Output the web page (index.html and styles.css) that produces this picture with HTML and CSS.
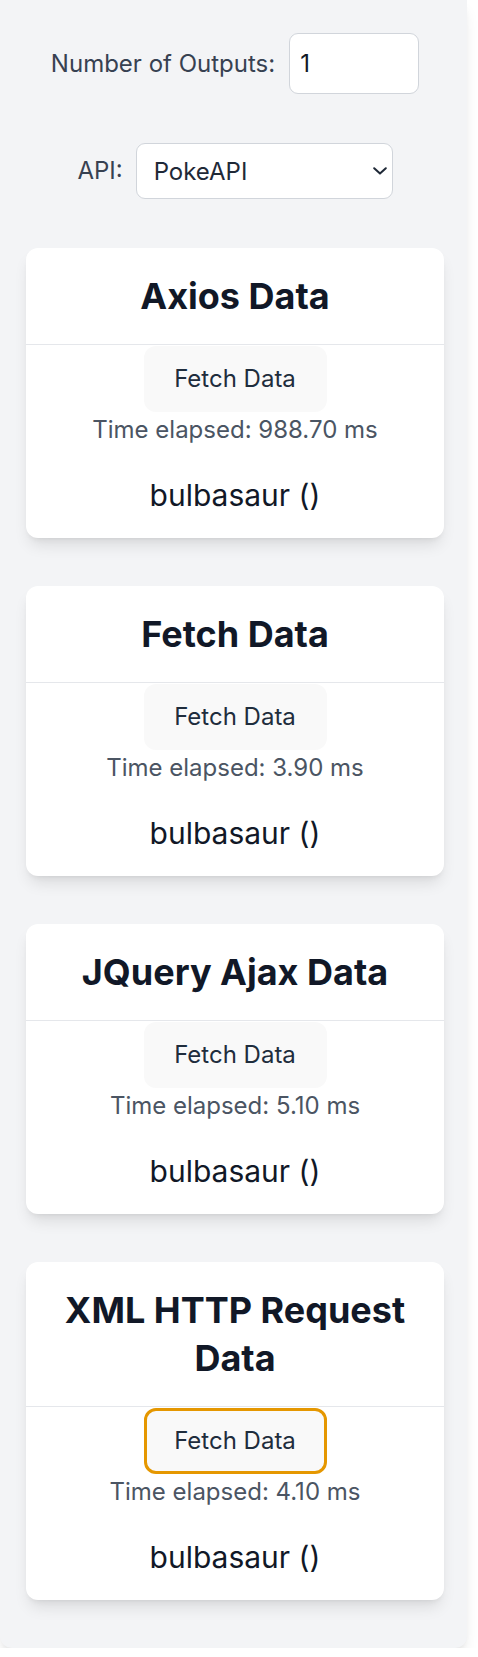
FILE: index.html
```html
<!DOCTYPE html>
<html lang="en">
<head>
<meta charset="utf-8">
<title>API Comparison</title>
<link rel="stylesheet" href="styles.css">
</head>
<body>
<div class="app">
  <div class="field-row">
    <label class="field-label" for="count">Number of Outputs:</label>
    <input id="count" class="num-input" type="text" value="1">
  </div>
  <div class="field-row api-row">
    <label class="field-label" for="api">API:</label>
    <div class="select-wrap">
      <select id="api" class="api-select">
        <option>PokeAPI</option>
      </select>
      <svg class="chevron" viewBox="0 0 14 8" width="14" height="8" aria-hidden="true"><path d="M1.2 1.2 L7 6.6 L12.8 1.2" fill="none" stroke="#1f2937" stroke-width="2" stroke-linecap="round" stroke-linejoin="round"/></svg>
    </div>
  </div>

  <div class="cards">
    <section class="card">
      <h2 class="card-title">Axios Data</h2>
      <div class="card-body">
        <button class="fetch-btn">Fetch Data</button>
        <p class="elapsed">Time elapsed: 988.70 ms</p>
        <p class="result">bulbasaur ()</p>
      </div>
    </section>
    <section class="card">
      <h2 class="card-title">Fetch Data</h2>
      <div class="card-body">
        <button class="fetch-btn">Fetch Data</button>
        <p class="elapsed">Time elapsed: 3.90 ms</p>
        <p class="result">bulbasaur ()</p>
      </div>
    </section>
    <section class="card">
      <h2 class="card-title">JQuery Ajax Data</h2>
      <div class="card-body">
        <button class="fetch-btn">Fetch Data</button>
        <p class="elapsed">Time elapsed: 5.10 ms</p>
        <p class="result">bulbasaur ()</p>
      </div>
    </section>
    <section class="card">
      <h2 class="card-title">XML HTTP Request Data</h2>
      <div class="card-body">
        <button class="fetch-btn focused">Fetch Data</button>
        <p class="elapsed">Time elapsed: 4.10 ms</p>
        <p class="result">bulbasaur ()</p>
      </div>
    </section>
  </div>
</div>
</body>
</html>
```

FILE: styles.css
```css
html, body {
  margin: 0;
  padding: 0;
  background: #ffffff;
}

body {
  font-family: Inter, "Noto Sans", "Liberation Sans", sans-serif;
  color: #213547;
}

.app {
  width: 467px;
  box-sizing: border-box;
  background: #f3f4f6;
  border-radius: 0 0 12px 12px;
  box-shadow: 0 10px 15px -3px rgba(0,0,0,0.1), 0 4px 6px -4px rgba(0,0,0,0.1);
  padding: 33px 23px 48px 26px;
  display: flex;
  flex-direction: column;
}

.field-row {
  display: flex;
  justify-content: center;
  align-items: center;
  gap: 14px;
  height: 61px;
}

.api-row {
  margin-top: 49px;
  height: 56px;
  gap: 13px;
}

.field-label {
  font-size: 24px;
  color: #374151;
  line-height: 36px;
}

.num-input {
  width: 130px;
  height: 61px;
  box-sizing: border-box;
  border: 1.5px solid #d1d5db;
  border-radius: 9px;
  background: #fff;
  padding: 0 10px;
  font-family: inherit;
  font-size: 24px;
  color: #111827;
  outline: none;
}

.select-wrap {
  position: relative;
  width: 257px;
  height: 56px;
}

.api-select {
  appearance: none;
  -webkit-appearance: none;
  width: 100%;
  height: 100%;
  box-sizing: border-box;
  border: 1.5px solid #d1d5db;
  border-radius: 9px;
  background: #fff;
  padding: 0 17px;
  font-family: inherit;
  font-size: 24px;
  color: #1f2937;
  outline: none;
}

.chevron {
  position: absolute;
  right: 6px;
  top: 24px;
  pointer-events: none;
}

.cards {
  margin-top: 49px;
  display: flex;
  flex-direction: column;
  gap: 48px;
}

.card {
  background: #fff;
  border-radius: 12px;
  box-shadow: 0 10px 15px -3px rgba(0,0,0,0.1), 0 4px 6px -4px rgba(0,0,0,0.1);
  overflow: hidden;
}

.card-title {
  margin: 0;
  padding: 24px 30px;
  font-size: 36px;
  line-height: 48px;
  font-weight: 700;
  color: #111827;
  text-align: center;
  border-bottom: 1.5px solid #e5e7eb;
}

.card-body {
  display: flex;
  flex-direction: column;
  align-items: center;
  padding: 1px 0 19px;
}

.fetch-btn {
  font-family: inherit;
  font-size: 24px;
  line-height: 36px;
  font-weight: 400;
  color: #1f2d3d;
  background: #f9f9f9;
  border: 1.5px solid transparent;
  border-radius: 12px;
  padding: 14px 29px;
  width: 183px;
  height: 66px;
  box-sizing: border-box;
}

.fetch-btn.focused {
  border: 3px solid #e59700;
  padding: 12px 27px;
}

.elapsed {
  margin: 0;
  font-size: 24px;
  line-height: 36px;
  color: #4b5563;
}

.result {
  margin: 23px 0 0;
  font-size: 30px;
  line-height: 48px;
  font-weight: 400;
  color: #111827;
}
```
